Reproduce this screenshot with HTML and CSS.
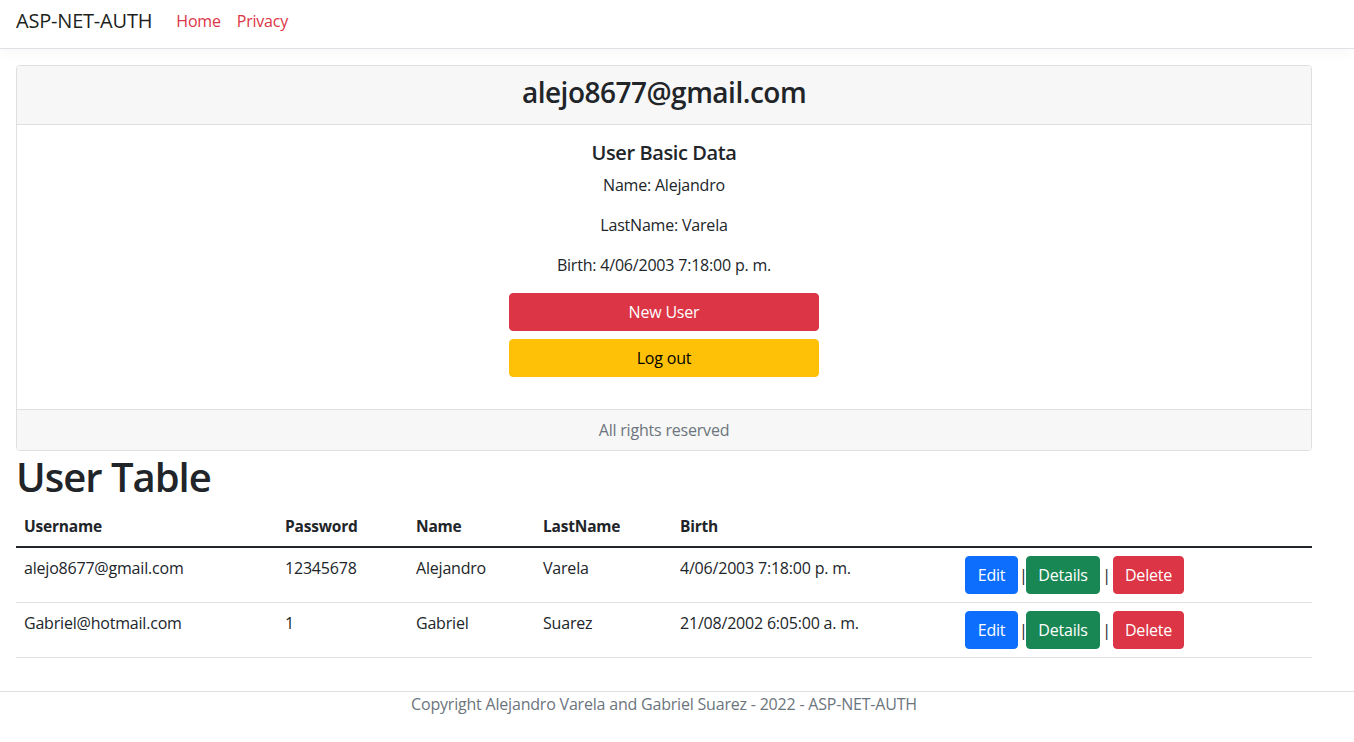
FILE: index.html
```html
<!DOCTYPE html>
<html lang="en">
<head>
<meta charset="utf-8">
<title>ASP-NET-AUTH</title>
<link rel="stylesheet" href="styles.css">
</head>
<body>
<header class="navbar">
  <a class="brand" href="#">ASP-NET-AUTH</a>
  <nav class="nav">
    <a class="nav-link" href="#">Home</a>
    <a class="nav-link" href="#">Privacy</a>
  </nav>
</header>

<main class="container">
  <section class="card">
    <div class="card-header"><h3 class="email">alejo8677@gmail.com</h3></div>
    <div class="card-body">
      <h5 class="card-title">User Basic Data</h5>
      <p>Name: Alejandro</p>
      <p>LastName: Varela</p>
      <p>Birth: 4/06/2003 7:18:00 p. m.</p>
      <div class="actions">
        <a class="btn btn-danger btn-wide" href="#">New User</a>
        <a class="btn btn-warning btn-wide" href="#">Log out</a>
      </div>
    </div>
    <div class="card-footer">All rights reserved</div>
  </section>

  <h1 class="page-title">User Table</h1>
  <table class="table">
    <thead>
      <tr>
        <th class="c-user">Username</th>
        <th class="c-pass">Password</th>
        <th class="c-name">Name</th>
        <th class="c-last">LastName</th>
        <th class="c-birth">Birth</th>
        <th class="c-act"></th>
      </tr>
    </thead>
    <tbody>
      <tr>
        <td>alejo8677@gmail.com</td>
        <td>12345678</td>
        <td>Alejandro</td>
        <td>Varela</td>
        <td>4/06/2003 7:18:00 p. m.</td>
        <td><a class="btn btn-primary b-edit" href="#">Edit</a><span class="sep sep-tight">|</span><a class="btn btn-success b-details" href="#">Details</a><span class="sep">|</span><a class="btn btn-danger b-delete" href="#">Delete</a></td>
      </tr>
      <tr>
        <td>Gabriel@hotmail.com</td>
        <td>1</td>
        <td>Gabriel</td>
        <td>Suarez</td>
        <td>21/08/2002 6:05:00 a. m.</td>
        <td><a class="btn btn-primary b-edit" href="#">Edit</a><span class="sep sep-tight">|</span><a class="btn btn-success b-details" href="#">Details</a><span class="sep">|</span><a class="btn btn-danger b-delete" href="#">Delete</a></td>
      </tr>
    </tbody>
  </table>
</main>

<footer class="footer">
  <div class="container footer-text">Copyright Alejandro Varela and Gabriel Suarez - 2022 - ASP-NET-AUTH</div>
</footer>
</body>
</html>
```

FILE: styles.css
```css
* { box-sizing: border-box; }

html, body {
  margin: 0;
  padding: 0;
}

body {
  font-family: "Open Sans", "Noto Sans", "Liberation Sans", sans-serif;
  font-size: 16px;
  line-height: 24px;
  color: #212529;
  background: #fff;
}

a { text-decoration: none; }

.navbar {
  display: flex;
  align-items: center;
  height: 49px;
  padding: 0 16px 7px 16px;
  border-bottom: 1px solid #dee2e6;
  box-shadow: 0 .25rem .75rem rgba(0,0,0,.03);
}

.brand {
  font-size: 20px;
  line-height: 30px;
  color: #1d1f21;
  margin-right: 16px;
  letter-spacing: -0.2px;
}

.nav { display: flex; }

.nav-link {
  color: #dc3545;
  padding: 0 8px;
  line-height: 24px;
  letter-spacing: -0.2px;
}

.container {
  width: 1312px;
  padding-left: 16px;
}

main.container { margin-top: 16px; }

.card {
  border: 1px solid #dfdfdf;
  border-radius: 4px;
  overflow: hidden;
}

.card-header {
  background: #f7f7f7;
  border-bottom: 1px solid #dfdfdf;
  padding: 9px 16px 7px;
  text-align: center;
}

.email {
  margin: 0 0 8px 0;
  font-size: 28px;
  line-height: 34px;
  font-weight: 600;
  letter-spacing: -0.5px;
}

.card-body {
  padding: 16px 16px 32px;
  text-align: center;
}

.card-title {
  margin: 0 0 8px 0;
  font-size: 20px;
  line-height: 24px;
  font-weight: 600;
  letter-spacing: -0.4px;
}

.card-body p {
  margin: 0 0 16px 0;
  letter-spacing: -0.2px;
}

.actions {
  display: flex;
  flex-direction: column;
  align-items: center;
  gap: 8px;
}

.btn {
  display: inline-block;
  padding: 6px 12px;
  border: 1px solid transparent;
  border-radius: 4px;
  line-height: 24px;
  text-align: center;
  vertical-align: middle;
  color: #fff;
  letter-spacing: -0.2px;
}

.btn-wide { width: 310px; }

.btn-danger { background: #dc3545; border-color: #dc3545; }
.btn-warning { background: #ffc107; border-color: #ffc107; color: #000; }
.btn-primary { background: #0d6efd; border-color: #0d6efd; }
.btn-success { background: #198754; border-color: #198754; }

.b-edit { width: 53px; padding: 6px 0; }
.b-details { width: 74px; padding: 6px 0; }
.b-delete { width: 71px; padding: 6px 0; }

.sep {
  display: inline-block;
  width: 13px;
  text-align: center;
  color: #212529;
  vertical-align: middle;
}

.sep-tight { width: 8px; text-align: left; padding-left: 1px; }

.card-footer {
  background: #f7f7f7;
  border-top: 1px solid #dfdfdf;
  padding: 8px 16px;
  text-align: center;
  color: #6c757d;
  letter-spacing: -0.2px;
}

.page-title {
  margin: 0;
  font-size: 40px;
  line-height: 48px;
  font-weight: 600;
  letter-spacing: -1px;
  padding-top: 2px;
  margin-bottom: 5px;
}

.table {
  width: 1296px;
  border-collapse: separate;
  border-spacing: 0;
  table-layout: fixed;
  margin-bottom: 16px;
}

.table th,
.table td {
  padding: 8px;
  text-align: left;
  vertical-align: top;
  letter-spacing: -0.2px;
}

.table th {
  font-weight: 700;
  border-bottom: 2px solid #212529;
  font-size: 15.5px;
}

.table td {
  border-bottom: 1px solid #dee2e6;
}

.c-user { width: 261px; }
.c-pass { width: 131px; }
.c-name { width: 127px; }
.c-last { width: 137px; }
.c-birth { width: 285px; }

.footer {
  margin-top: 33px;
  border-top: 1px solid #dee2e6;
}

.footer-text {
  text-align: center;
  color: #6c757d;
  line-height: 24px;
  letter-spacing: -0.2px;
}
```
